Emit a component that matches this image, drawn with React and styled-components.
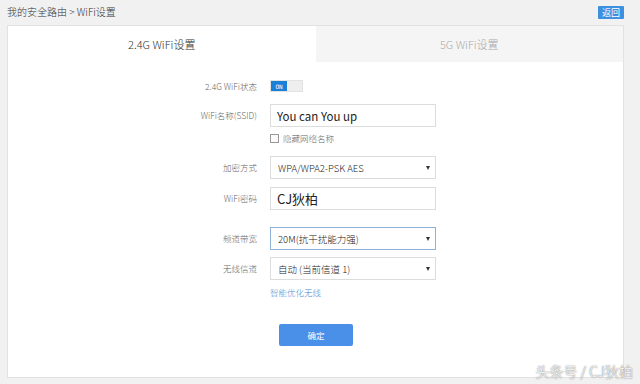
import React from "react";
import styled, { createGlobalStyle } from "styled-components";

const Global = createGlobalStyle`
  html, body { margin: 0; padding: 0; }
  body {
    width: 640px; height: 384px; overflow: hidden;
    background: #f1f1f1;
    font-family: "Noto Sans CJK SC", "Liberation Sans", sans-serif;
  }
`;

const Page = styled.div`
  position: relative;
  width: 640px; height: 384px;
  padding: 0 16px 6px 7px;
  box-sizing: border-box;
  display: flex; flex-direction: column;
`;

const TopBar = styled.div`
  height: 25px;
  display: flex; align-items: center; justify-content: space-between;
  box-sizing: border-box;
  padding-bottom: 2px;
`;

const Crumb = styled.div`
  font-size: 10px; color: #333; font-weight: 300;
`;

const BackBtn = styled.button`
  border: none; background: #3d8fe0; color: #fff;
  font-size: 9px; padding: 0 4px; height: 13px; line-height: 13px;
  border-radius: 1px; margin-top: 2px; font-family: inherit; cursor: pointer;
`;

const Panel = styled.div`
  flex: 1;
  background: #fff;
  border: 1px solid #e2e2e2;
  display: flex; flex-direction: column;
`;

const Tabs = styled.div`
  display: flex; height: 36px;
`;

const Tab = styled.div`
  flex: 1;
  display: flex; align-items: center; justify-content: center;
  font-size: 11px; font-weight: 300;
  color: ${p => (p.$active ? "#333" : "#aaa")};
  background: ${p => (p.$active ? "#fff" : "#f5f5f5")};
`;

const Form = styled.div`
  display: grid;
  grid-template-columns: 249px 166px;
  column-gap: 13px;
  align-items: center;
  padding-top: 18px;
`;

const Label = styled.div`
  text-align: right; font-size: 8.5px; color: #666; font-weight: 300;
  height: ${p => p.$h || 23}px; line-height: ${p => p.$h || 23}px;
  margin-top: ${p => p.$mt || 0}px;
`;

const Cell = styled.div`
  margin-top: ${p => p.$mt || 0}px;
  height: ${p => p.$h || 23}px;
  display: flex; align-items: ${p => p.$top ? "flex-start" : "center"};
`;

const Toggle = styled.div`
  width: 31px; height: 10px; display: flex; border: 1px solid #e2e2e2; background: #eee;
`;
const ToggleOn = styled.div`
  width: 16px; background: #1a7fd6; color: #fff; font-size: 6px;
  display: flex; align-items: center; justify-content: center; font-family: "DejaVu Sans Mono", monospace;
`;

const Input = styled.div`
  box-sizing: border-box; width: 166px; height: 23px;
  border: 1px solid ${p => (p.$focus ? "#8fb1d8" : "#dcdcdc")};
  display: flex; align-items: center; padding: 0 ${p => p.$pad || 7}px;
  font-size: ${p => p.$fs || 12}px; color: #222;
  font-weight: ${p => p.$fw || 400};
  position: relative;
`;

const Arrow = styled.span`
  position: absolute; right: 5px; top: 9px;
  width: 0; height: 0;
  border-left: 2.5px solid transparent; border-right: 2.5px solid transparent;
  border-top: 4px solid #333;
`;

const CheckRow = styled.div`
  display: flex; align-items: center; gap: 4px; font-size: 8.5px; color: #666; font-weight: 300;
`;
const Box = styled.span`
  width: 7px; height: 7px; border: 1px solid #999; background: #fafafa;
`;

const Link = styled.div`
  font-size: 8.5px; color: #4e8bd0; font-weight: 300;
`;

const Submit = styled.button`
  margin-top: 20px; margin-left: 9px;
  width: 74px; height: 22px; border: none; background: #4a90e8; color: #fff;
  font-size: 8.5px; border-radius: 2px; font-family: inherit;
`;

const Watermark = styled.div`
  position: absolute; right: 7px; bottom: 3px;
  font-size: 14px; color: #fff; font-weight: 300;
  text-shadow: 0 0 1px #666, 0 0 2px #999;
`;

export default function App() {
  return (
    <>
      <Global />
      <Page>
        <TopBar>
          <Crumb>我的安全路由 &gt; WiFi设置</Crumb>
          <BackBtn>返回</BackBtn>
        </TopBar>
        <Panel>
          <Tabs>
            <Tab $active>2.4G WiFi设置</Tab>
            <Tab>5G WiFi设置</Tab>
          </Tabs>
          <Form>
            <Label $h={12}>2.4G WiFi状态</Label>
            <Cell $h={12}>
              <Toggle><ToggleOn>ON</ToggleOn></Toggle>
            </Cell>

            <Label $mt={12}>WiFi名称(SSID)</Label>
            <Cell $mt={12}><Input $fs={11.5} $pad={6}>You can You up</Input></Cell>

            <div />
            <Cell $h={22}><CheckRow><Box />隐藏网络名称</CheckRow></Cell>

            <Label $mt={7}>加密方式</Label>
            <Cell $mt={7}><Input $fs={9.5} $fw={300}>WPA/WPA2-PSK AES<Arrow /></Input></Cell>

            <Label $mt={8}>WiFi密码</Label>
            <Cell $mt={8}><Input $fs={13} $pad={6}>CJ狄柏</Input></Cell>

            <Label $mt={17}>频道带宽</Label>
            <Cell $mt={17}><Input $fs={9.5} $fw={300} $focus>20M(抗干扰能力强)<Arrow /></Input></Cell>

            <Label $mt={7}>无线信道</Label>
            <Cell $mt={7}><Input $fs={9.5} $fw={300}>自动 (当前信道 1)<Arrow /></Input></Cell>

            <div />
            <Cell $h={24}><Link>智能优化无线</Link></Cell>

            <div />
            <Cell $h={53} $top><Submit>确定</Submit></Cell>
          </Form>
        </Panel>
        <Watermark>头条号 / CJ狄柏</Watermark>
      </Page>
    </>
  );
}
